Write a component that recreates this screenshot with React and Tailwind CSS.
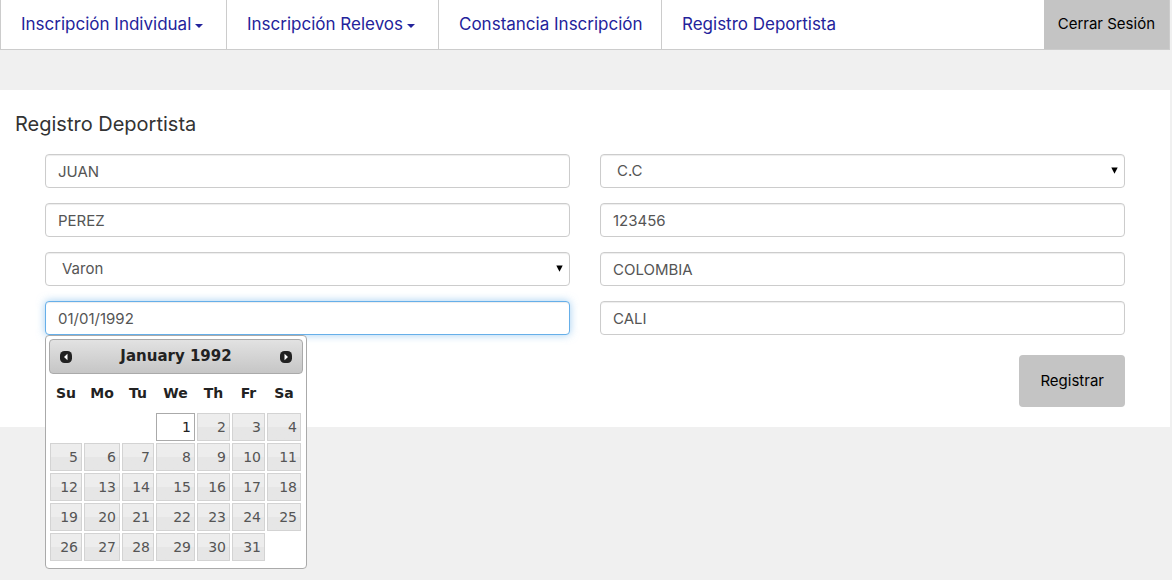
import React, { useState } from "react";

const field =
  "block h-[34px] w-full rounded border border-[#ccc] bg-white px-3 text-[15px] text-[#555] shadow-[inset_0_1px_1px_rgba(0,0,0,0.075)] outline-none focus:border-[#66afe9] focus:shadow-[inset_0_1px_1px_rgba(0,0,0,0.075),0_0_8px_rgba(102,175,233,0.6)]";

const navLinks = [
  { label: "Inscripción Individual", menu: true, width: "w-[226px]" },
  { label: "Inscripción Relevos", menu: true, width: "w-[212px]" },
  { label: "Constancia Inscripción", menu: false, width: "w-[223px]" },
  { label: "Registro Deportista", menu: false, width: "w-[223px]" },
];

const weekdays = [
  { name: "Su", width: "w-[34px]" },
  { name: "Mo", width: "w-[38px]" },
  { name: "Tu", width: "w-[34px]" },
  { name: "We", width: "w-[41px]" },
  { name: "Th", width: "w-[35px]" },
  { name: "Fr", width: "w-[35px]" },
  { name: "Sa", width: "w-[36px]" },
];

const weeks = [0, 1, 2, 3, 4].map((w) =>
  [0, 1, 2, 3, 4, 5, 6].map((d) => {
    const day = w * 7 + d - 2;
    return day >= 1 && day <= 31 ? day : null;
  })
);

function Caret() {
  return (
    <svg className="mt-[2px] h-1 w-2" viewBox="0 0 8 4" aria-hidden="true">
      <path d="M0 0h8L4 4z" fill="currentColor" />
    </svg>
  );
}

function TextField({ label, value }) {
  return <input type="text" aria-label={label} defaultValue={value} className={field} />;
}

function SelectField({ label, options }) {
  return (
    <div className="relative">
      <select aria-label={label} className={field + " appearance-none pl-4"}>
        {options.map((o) => (
          <option key={o}>{o}</option>
        ))}
      </select>
      <svg
        className="pointer-events-none absolute top-[13px] right-[7px] h-[7px] w-[7px]"
        viewBox="0 0 7 7"
        aria-hidden="true"
      >
        <path d="M0.3 0.5h6.4L3.5 6.8z" fill="#000" />
      </svg>
    </div>
  );
}

function MonthButton({ label, path }) {
  return (
    <button type="button" aria-label={label} className="block h-3 w-3">
      <svg className="h-3 w-3" viewBox="0 0 12 12" aria-hidden="true">
        <rect width="12" height="12" rx="4.5" fill="#222" />
        <path d={path} fill="#fff" />
      </svg>
    </button>
  );
}

function Calendar({ selected, onSelect }) {
  return (
    <div className="absolute top-full left-0 z-10 w-[262px] rounded border border-[#aaa] bg-white px-[3px] pt-[3px] pb-[6px] font-['DejaVu_Sans',sans-serif] text-[#222]">
      <div className="flex h-[35px] items-center justify-between rounded border border-[#aaa] bg-linear-to-b from-[#e2e2e2] to-[#c6c6c6] px-[10px]">
        <MonthButton label="Prev" path="M7.5 2.8v6.4L4 6z" />
        <span className="text-[15px] font-bold">January 1992</span>
        <MonthButton label="Next" path="M4.5 2.8v6.4L8 6z" />
      </div>
      <table className="w-[253px] table-fixed border-collapse text-[14px]">
        <thead>
          <tr className="h-[38px]">
            {weekdays.map((d) => (
              <th key={d.name} scope="col" className={d.width + " p-0 text-center font-bold"}>
                {d.name}
              </th>
            ))}
          </tr>
        </thead>
        <tbody>
          {weeks.map((week, i) => (
            <tr key={i} className="h-[30px]">
              {week.map((day, j) => (
                <td key={j} className="p-px">
                  {day && (
                    <button
                      type="button"
                      onClick={() => onSelect(day)}
                      className={
                        "block h-7 w-full border pr-[3px] text-right text-[14px] " +
                        (day === selected
                          ? "border-[#aaa] bg-white text-[#212121]"
                          : "border-[#d3d3d3] bg-linear-to-b from-[#ededed] from-50% to-[#e6e6e6] to-50% text-[#555]")
                      }
                    >
                      {day}
                    </button>
                  )}
                </td>
              ))}
            </tr>
          ))}
        </tbody>
      </table>
    </div>
  );
}

export default function App() {
  const [day, setDay] = useState(1);
  const date = "01/" + String(day).padStart(2, "0") + "/1992";

  return (
    <div className="min-h-screen bg-[#f0f0f0] pr-[2px] font-[Inter,sans-serif] text-[#333]">
      <nav className="flex h-[50px] border-b border-l border-[#ccc] bg-white text-[17px] text-[#23239b]">
        {navLinks.map((item, i) => (
          <a
            key={item.label}
            href="#"
            className={
              item.width +
              " flex shrink-0 items-center gap-1 px-5 whitespace-nowrap" +
              (i < navLinks.length - 1 ? " border-r border-[#ccc]" : "")
            }
          >
            {item.label}
            {item.menu && <Caret />}
          </a>
        ))}
        <button
          type="button"
          className="ml-auto border-r border-[#ccc] bg-[#c4c4c4] px-[14px] text-[15px] whitespace-nowrap text-black"
        >
          Cerrar Sesión
        </button>
      </nav>

      <main className="mt-10 bg-white pt-5 pb-5">
        <h1 className="px-[15px] text-[20px] leading-7">Registro Deportista</h1>
        <form className="px-[45px] pt-4" onSubmit={(e) => e.preventDefault()}>
          <div className="grid grid-cols-2 gap-x-[30px] gap-y-[15px]">
            <TextField label="Nombres" value="JUAN" />
            <SelectField label="Tipo de documento" options={["C.C", "T.I"]} />
            <TextField label="Apellidos" value="PEREZ" />
            <TextField label="Documento" value="123456" />
            <SelectField label="Sexo" options={["Varon", "Dama"]} />
            <TextField label="País" value="COLOMBIA" />
            <div className="relative">
              <input
                type="text"
                aria-label="Fecha de nacimiento"
                readOnly
                autoFocus
                value={date}
                className={field + " caret-transparent"}
              />
              <Calendar selected={day} onSelect={setDay} />
            </div>
            <TextField label="Ciudad" value="CALI" />
          </div>
          <div className="mt-5 flex justify-end">
            <button
              type="submit"
              className="h-[52px] rounded bg-[#c4c4c4] px-[21px] text-[15px] text-black"
            >
              Registrar
            </button>
          </div>
        </form>
      </main>
    </div>
  );
}
